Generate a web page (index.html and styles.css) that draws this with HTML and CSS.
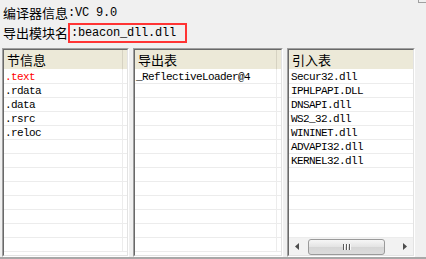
FILE: index.html
```html
<!DOCTYPE html>
<html lang="zh-CN">
<head>
  <meta charset="UTF-8">
  <title>PE Info</title>
  <link rel="stylesheet" href="styles.css">
</head>
<body>
  <div class="top">
    <div class="info">
      <div class="line">编译器信息<span class="asc">:VC 9.0</span></div>
      <div class="line">导出模块名<span class="asc mark">:beacon_dll.dll</span></div>
    </div>
    <div class="corner"></div>
  </div>

  <div class="panels">
    <div class="list">
      <div class="frame">
        <table class="grid">
          <thead><tr><th>节信息</th><th class="pad"></th></tr></thead>
          <tbody>
            <tr class="hot"><td>.text</td><td></td></tr>
            <tr><td>.rdata</td><td></td></tr>
            <tr><td>.data</td><td></td></tr>
            <tr><td>.rsrc</td><td></td></tr>
            <tr><td>.reloc</td><td></td></tr>
            <tr><td></td><td></td></tr>
            <tr><td></td><td></td></tr>
            <tr><td></td><td></td></tr>
            <tr><td></td><td></td></tr>
            <tr><td></td><td></td></tr>
            <tr><td></td><td></td></tr>
            <tr><td></td><td></td></tr>
            <tr><td></td><td></td></tr>
          </tbody>
        </table>
      </div>
    </div>

    <div class="list">
      <div class="frame">
        <table class="grid">
          <thead><tr><th>导出表</th><th class="pad"></th></tr></thead>
          <tbody>
            <tr><td>_ReflectiveLoader@4</td><td></td></tr>
            <tr><td></td><td></td></tr>
            <tr><td></td><td></td></tr>
            <tr><td></td><td></td></tr>
            <tr><td></td><td></td></tr>
            <tr><td></td><td></td></tr>
            <tr><td></td><td></td></tr>
            <tr><td></td><td></td></tr>
            <tr><td></td><td></td></tr>
            <tr><td></td><td></td></tr>
            <tr><td></td><td></td></tr>
            <tr><td></td><td></td></tr>
            <tr><td></td><td></td></tr>
          </tbody>
        </table>
      </div>
    </div>

    <div class="list">
      <div class="frame">
        <div class="body">
          <table class="grid single">
            <thead><tr><th>引入表</th></tr></thead>
            <tbody>
              <tr><td>Secur32.dll</td></tr>
              <tr><td>IPHLPAPI.DLL</td></tr>
              <tr><td>DNSAPI.dll</td></tr>
              <tr><td>WS2_32.dll</td></tr>
              <tr><td>WININET.dll</td></tr>
              <tr><td>ADVAPI32.dll</td></tr>
              <tr><td>KERNEL32.dll</td></tr>
              <tr><td></td></tr>
              <tr><td></td></tr>
              <tr><td></td></tr>
              <tr><td></td></tr>
              <tr><td></td></tr>
            </tbody>
          </table>
        </div>
        <div class="hscroll">
          <div class="arrow">
            <svg width="5" height="7" viewBox="0 0 5 7"><polygon points="4,0 0,3.5 4,7" fill="#4d4d4d"/></svg>
          </div>
          <div class="track">
            <div class="thumb"><span></span><span></span><span></span></div>
          </div>
          <div class="arrow">
            <svg width="5" height="7" viewBox="0 0 5 7"><polygon points="1,0 5,3.5 1,7" fill="#4d4d4d"/></svg>
          </div>
        </div>
      </div>
    </div>
  </div>

  <div class="edge"></div>
</body>
</html>
```

FILE: styles.css
```css
body {
  margin: 0;
  background-color: #f0f0f0;
  font-family: "Noto Sans CJK SC", sans-serif;
  font-size: 13px;
  color: #000;
  overflow: hidden;
}
.top {
  display: flex;
  align-items: flex-start;
  height: 45px;
}
.info {
  padding: 3px 0 0 3px;
}
.line {
  height: 20px;
  line-height: 20px;
  display: flex;
  align-items: center;
}
.asc {
  font-family: "Liberation Mono", monospace;
  font-size: 12px;
  letter-spacing: -0.2px;
}
.mark {
  box-sizing: border-box;
  height: 20px;
  line-height: 16px;
  border: 2px solid #ff3434;
  padding: 0 9px 0 1px;
}
.corner {
  margin-left: auto;
  width: 7px;
  height: 2px;
  border-left: 1px solid #a0a0a0;
  border-bottom: 1px solid #a0a0a0;
}
.panels {
  display: grid;
  grid-template-columns: 127px 150px 128px;
  column-gap: 4px;
  padding: 3px 0 0 2px;
  height: 201px;
}
.list {
  border: 1px solid;
  border-color: #a0a0a0 #fff #fff #a0a0a0;
  min-width: 0;
}
.frame {
  box-sizing: border-box;
  height: 100%;
  border: 1px solid;
  border-color: #696969 #e3e3e3 #e3e3e3 #696969;
  background-color: #fff;
  overflow: hidden;
  display: flex;
  flex-direction: column;
}
.body {
  flex: 1;
  overflow: hidden;
}
.grid {
  width: 100%;
  border-collapse: separate;
  border-spacing: 0;
  table-layout: fixed;
}
.grid th {
  height: 19px;
  padding: 0 0 0 3px;
  background-color: #ece9d8;
  border-bottom: 1px solid #fff;
  border-right: 1px solid #d6d2c2;
  text-align: left;
  font-weight: normal;
  font-size: 13px;
  line-height: 19px;
  white-space: nowrap;
}
.grid th.pad {
  width: 4px;
  padding: 0;
  border-right: none;
}
.grid td {
  padding: 1px 0 0 1px;
  height: 12px;
  line-height: 12px;
  border-bottom: 1px solid #ececec;
  border-right: 1px solid #ececec;
  font-family: "Liberation Mono", monospace;
  font-size: 11px;
  letter-spacing: -0.6px;
  white-space: nowrap;
  overflow: hidden;
}
.grid td:last-child {
  border-right: none;
}
.single th {
  border-right: none;
}
.single td {
  padding-left: 2px;
}
.hot td {
  color: #f00;
}
.hscroll {
  height: 17px;
  display: flex;
  background-color: #f2f2f2;
  flex-shrink: 0;
}
.arrow {
  width: 17px;
  display: flex;
  align-items: center;
  justify-content: center;
}
.track {
  flex: 1;
  padding: 0 2px;
}
.thumb {
  box-sizing: border-box;
  width: 77px;
  height: 16px;
  margin-top: 1px;
  border: 1px solid #9a9a9a;
  border-radius: 3px;
  background: linear-gradient(#f6f6f6, #e3e3e3 50%, #d6d6d6 51%, #dcdcdc);
  display: flex;
  justify-content: center;
  align-items: center;
  gap: 1px;
}
.thumb span {
  width: 1px;
  height: 6px;
  background-color: #5a5a5a;
  border-right: 1px solid #fafafa;
}
.edge {
  margin-top: 8px;
  height: 2px;
  background-color: #a8a8a8;
}
```
